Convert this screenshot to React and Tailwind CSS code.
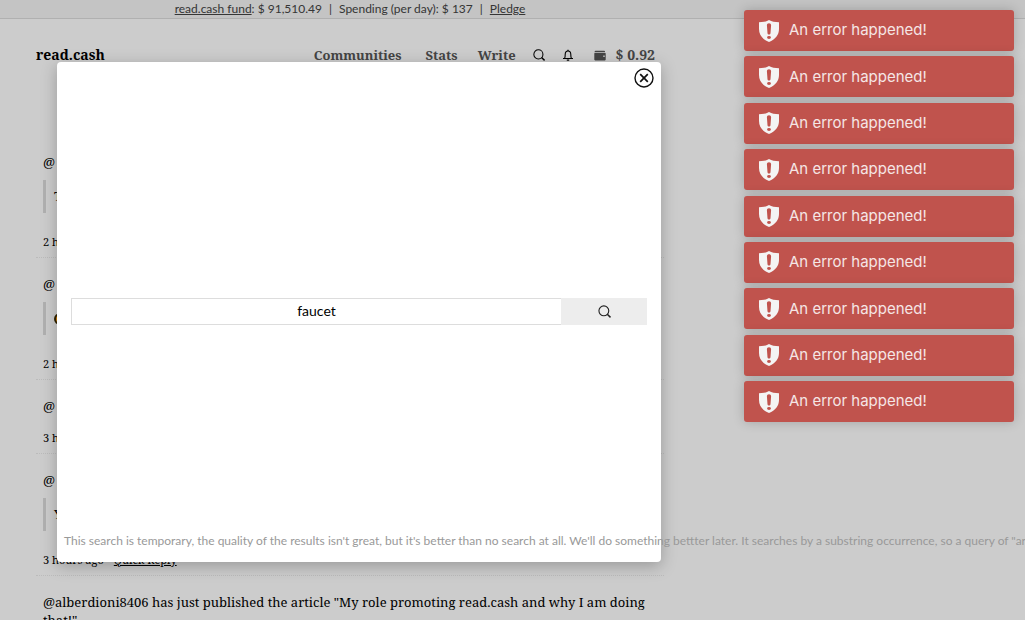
import React, { useState } from "react";

const SERIF = "font-['Noto_Serif','Liberation_Serif',serif]";

const feed = [
  { id: 1, title: "@", quote: "T", time: "2 h" },
  { id: 2, title: "@", coin: true, time: "2 h" },
  { id: 3, title: "@", time: "3 h" },
  { id: 4, title: "@", quote: "Y", time: "3 hours ago", reply: true },
];

const toasts = [1, 2, 3, 4, 5, 6, 7, 8, 9];

const SearchIcon = ({ className }) => (
  <svg viewBox="0 0 14 14" className={className} fill="none" stroke="currentColor" aria-hidden="true">
    <circle cx="6.300" cy="6.300" r="5.300" strokeWidth="1.200" />
    <path d="M10 10l3.500 3.300" strokeWidth="1.700" />
  </svg>
);

const BellIcon = () => (
  <svg viewBox="0 0 12 12" className="w-3 h-3" fill="none" stroke="currentColor" aria-hidden="true">
    <path d="M1 9.500h10M2.600 9.200C3.200 8.200 3.200 7 3.200 5.500 3.200 3.300 4.200 2 6 2s2.800 1.300 2.800 3.500c0 1.500 0 2.700.6 3.700" strokeWidth="1.100" />
    <path d="M6 .7V2M4.800 11.200h2.400" strokeWidth="1.200" />
  </svg>
);

const WalletIcon = () => (
  <svg viewBox="0 0 12 11" className="w-3 h-[11px]" fill="currentColor" aria-hidden="true">
    <path d="M1.500.8h8.700c.5 0 .8.300.8.800v.5H1.500c-.4 0-.7.1-.9.300V1.700C.6 1.200 1 .8 1.500.8Z" />
    <path
      fillRule="evenodd"
      d="M1.300 2.700h9.500c.5 0 .9.4.9.9v5.900c0 .5-.4.900-.9.900H1.300c-.6 0-1-.4-1-.9V3.600c0-.5.4-.9 1-.9ZM9.300 5.600v1.300h1.400V5.600Z"
    />
  </svg>
);

const ShieldIcon = () => (
  <svg viewBox="0 0 20 22" className="w-5 h-[22px] shrink-0" aria-hidden="true">
    <path
      fill="#f4f4f4"
      d="M10 0C7.4 1.6 4 2.2 0 2.2V9c0 5.800 3.700 10.600 10 13 6.300-2.400 10-7.200 10-13V2.200C16 2.200 12.600 1.600 10 0Z"
    />
    <path fill="#c0534d" d="M10 3.200c1.300 0 2.100.8 2.100 2.100L11.500 13.200c-.1.900-.7 1.400-1.500 1.400s-1.400-.5-1.500-1.400L7.900 5.300c0-1.300.8-2.100 2.100-2.100Z" />
    <ellipse cx="10" cy="17.500" rx="1.900" ry="1.400" fill="#c0534d" />
  </svg>
);

const CloseIcon = () => (
  <svg viewBox="0 0 20 20" className="w-5 h-5" fill="none" stroke="#111" aria-hidden="true">
    <circle cx="10" cy="10" r="9" strokeWidth="1.400" />
    <path d="M6.200 6.200l7.600 7.600M13.800 6.200l-7.600 7.600" strokeWidth="1.700" />
  </svg>
);

const FeedItem = ({ item }) => (
  <article className="border-b border-dotted border-[#eaeaea] px-[7px] pt-[17px] pb-[6px]">
    <p className="text-[13px] leading-[18px]">{item.title}</p>
    {(item.quote || item.coin) && (
      <blockquote className="mt-[9px] mb-5 h-[33px] flex items-center border-l-[3px] border-[#ddd] pl-2 text-[13px]">
        {item.coin ? (
          <span className="w-3 h-3 rounded-full border-2 border-[#3a2a00] bg-amber-500" />
        ) : (
          item.quote
        )}
      </blockquote>
    )}
    <div className="mt-[14px] flex gap-[10px] text-[11px] leading-[18px]">
      <span>{item.time}</span>
      {item.reply && (
        <a href="#reply" className="underline">
          Quick Reply
        </a>
      )}
    </div>
  </article>
);

const SearchModal = () => {
  const [query, setQuery] = useState("faucet");

  return (
    <div
      role="dialog"
      aria-label="Search"
      className="absolute left-[57px] top-[62px] w-[604px] h-[500px] flex flex-col rounded bg-white shadow-[0_4px_16px_rgba(0,0,0,0.25)]"
    >
      <div className="flex justify-end pt-[6px] pr-[7px]">
        <button type="button" aria-label="Close">
          <CloseIcon />
        </button>
      </div>

      <form
        className="flex-1 flex items-center px-[14px] pt-[2px]"
        onSubmit={(e) => e.preventDefault()}
      >
        <input
          type="text"
          aria-label="Search text"
          value={query}
          onChange={(e) => setQuery(e.target.value)}
          className="flex-1 min-w-0 h-[27px] border border-r-0 border-[#ddd] pb-[2px] text-center text-sm text-black outline-none"
        />
        <button
          type="submit"
          aria-label="Search"
          className="w-[86px] h-[27px] flex items-center justify-center bg-[#ededed] text-[#222]"
        >
          <SearchIcon className="w-[13px] h-[13px]" />
        </button>
      </form>

      <p className="pl-[7px] pb-3 text-xs leading-[18px] whitespace-nowrap text-[#999]">
        This search is temporary, the quality of the results isn't great, but
        it's better than no search at all. We'll do something bettter later. It
        searches by a substring occurrence, so a query of "ar
      </p>
    </div>
  );
};

const App = () => {
  return (
    <div className="relative h-screen overflow-hidden bg-white font-['Lato',sans-serif] text-black">
      {/* Fund bar */}
      <div className="h-[19px] border-b border-[#dcdcdc] bg-[#f5f5f5]">
        <div className="max-w-[700px] flex justify-center gap-[7px] text-xs leading-[17px] text-[#444]">
          <span>
            <a href="#fund" className="underline">
              read.cash fund
            </a>
            : $ 91,510.49
          </span>
          <span>|</span>
          <span>Spending (per day): $ 137</span>
          <span>|</span>
          <a href="#pledge" className="underline">
            Pledge
          </a>
        </div>
      </div>

      {/* Page column */}
      <div className={`max-w-[700px] px-9 ${SERIF}`}>
        <header className="h-[117px] pt-[26px] pr-[9px] flex items-start justify-between font-bold text-[13px] leading-5">
          <a href="#home" className="text-sm leading-5">
            read.cash
          </a>
          <nav className="flex items-center text-[#555]">
            <a href="#communities">Communities</a>
            <a href="#stats" className="ml-6">Stats</a>
            <a href="#write" className="ml-5">Write</a>
            <button type="button" aria-label="Search" className="ml-[17px] text-black">
              <SearchIcon className="w-3 h-3" />
            </button>
            <button type="button" aria-label="Notifications" className="ml-[17px] text-black">
              <BellIcon />
            </button>
            <a href="#wallet" className="ml-5 flex items-center gap-[10px] text-sm leading-5">
              <WalletIcon />
              $ 0.92
            </a>
          </nav>
        </header>

        <main>
          {feed.map((item) => (
            <FeedItem key={item.id} item={item} />
          ))}
          <article className="px-[7px] pt-[17px]">
            <p className="text-[13px] leading-[18px]">
              @alberdioni8406 has just published the article "My role promoting
              read.cash and why I am doing that!"
            </p>
          </article>
        </main>
      </div>

      {/* Backdrop */}
      <div className="absolute inset-0 bg-black/20" />

      <SearchModal />

      {/* Notifications */}
      <div className="absolute right-[11px] top-[10px] w-[270px] h-[412px] flex flex-col justify-between">
        {toasts.map((id) => (
          <div
            key={id}
            role="alert"
            className="h-[41px] flex items-center gap-[10px] rounded-[3px] bg-[#c0534d] px-[15px] font-['Inter',sans-serif] text-[15px] text-[#f5e6e5] shadow-[0_0_12px_rgba(0,0,0,0.2)]"
          >
            <ShieldIcon />
            An error happened!
          </div>
        ))}
      </div>
    </div>
  );
};

export default App;
